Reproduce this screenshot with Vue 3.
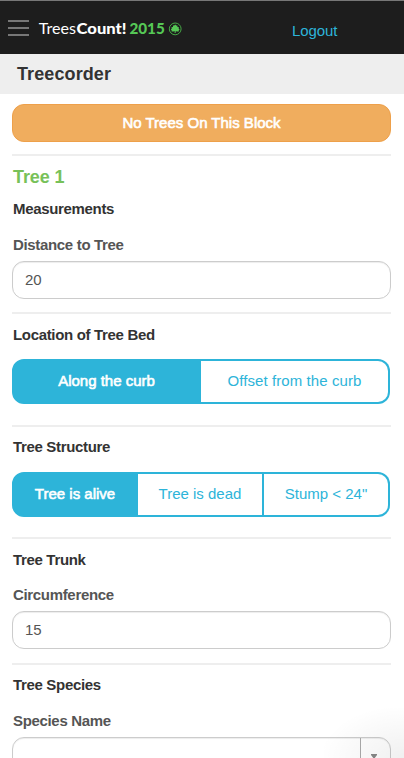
<script setup>
import { ref } from 'vue'

const distance = ref('20')
const circumference = ref('15')
const species = ref('')
const bed = ref(0)
const structure = ref(0)
const beds = ['Along the curb', 'Offset from the curb']
const structures = ['Tree is alive', 'Tree is dead', 'Stump < 24"']
</script>

<template>
  <div class="page">
    <header class="topbar">
      <button class="burger" aria-label="Menu"><i></i><i></i><i></i></button>
      <svg class="logo" width="146" height="20" viewBox="0 0 146 20">
        <text class="light" x="0.8" y="15.3" textLength="37.2" lengthAdjust="spacingAndGlyphs">Trees</text>
        <text class="heavy" x="38.6" y="15.3" textLength="50" lengthAdjust="spacingAndGlyphs">Count!</text>
        <text class="heavy green" x="91.4" y="15.3" textLength="35.4" lengthAdjust="spacingAndGlyphs">2015</text>
        <circle cx="137.2" cy="9.9" r="5.9" fill="none" stroke="#46a846" stroke-width="1" />
        <path fill="#56c856" d="M137.2 5.4l1 1.2 1.2-.1v1.5l1.6.3-.4 1.2 1 1-.9.9.1 1.1-1.9.1-1.2-.5.2 1.7h-1.4l.2-1.7-1.2.5-1.9-.1.1-1.1-.9-.9 1-1-.4-1.2 1.6-.3V6.500l1.2.1z" />
      </svg>
      <a class="logout">Logout</a>
    </header>
    <h1 class="title">Treecorder</h1>

    <main class="content">
      <button class="none">No Trees On This Block</button>

      <section class="first">
        <h2>Tree 1</h2>
        <h3>Measurements</h3>
        <label>Distance to Tree</label>
        <input v-model="distance" class="field" type="text" />
      </section>

      <section class="s-bed">
        <h3>Location of Tree Bed</h3>
        <div class="group two">
          <button v-for="(b, i) in beds" :key="b" :class="{ on: bed === i }" @click="bed = i">{{ b }}</button>
        </div>
      </section>

      <section class="s-structure">
        <h3>Tree Structure</h3>
        <div class="group three">
          <button v-for="(s, i) in structures" :key="s" :class="{ on: structure === i }" @click="structure = i">{{ s }}</button>
        </div>
      </section>

      <section class="s-trunk">
        <h3>Tree Trunk</h3>
        <label>Circumference</label>
        <input v-model="circumference" class="field" type="text" />
      </section>

      <section class="s-species">
        <h3>Tree Species</h3>
        <label>Species Name</label>
        <div class="field combo">
          <input v-model="species" type="text" />
          <span class="toggle"><svg width="6" height="6" viewBox="0 0 6 6"><path d="M0 0h6v1L3 5 0 1z" fill="#888" /></svg></span>
        </div>
      </section>
    </main>
    <div class="shade"></div>
  </div>
</template>

<style>
body { background: #fff; overflow: hidden; }
</style>

<style scoped>
* { box-sizing: border-box; margin: 0; }
.page {
  position: relative;
  height: 758px;
  overflow: hidden;
  background: #fff;
  color: #333;
  font: 15px/20px "Liberation Sans", Arial, sans-serif;
}
button, input { font: inherit; letter-spacing: inherit; padding: 0; border: 0; background: none; color: inherit; outline: 0; }
.topbar {
  display: flex;
  height: 54px;
  padding-left: 8px;
  border-top: 1px solid #777;
  background: #1d1d1d;
}
.burger { display: flex; flex-direction: column; gap: 5px; width: 21px; margin-top: 19px; }
.burger i { width: 21px; height: 2px; background: #777; }
.logo { margin: 18px 0 0 9px; font-family: Lato, sans-serif; font-size: 15.5px; fill: #fff; }
.light { font-weight: 400; }
.heavy { font-weight: 900; }
.green { fill: #56c856; }
.logout { margin: 20px 0 0 108px; color: #2db4d9; letter-spacing: -0.1px; }
.title { height: 40px; padding: 10px 17px; background: #eee; font-size: 18px; line-height: 20px; letter-spacing: 0.1px; }
.content { padding: 10px 13px 0 12px; }
.none {
  display: block;
  width: 100%;
  height: 38px;
  border: 1px solid #eea04a;
  border-radius: 12px;
  background: #f0ad5e;
  color: #fff;
  letter-spacing: 0;
  -webkit-text-stroke: 0.6px #fff;
}
section { border-top: 2px solid #eee; }
h2 { height: 20px; padding-left: 1px; font-size: 18px; line-height: 20px; color: #77c159; letter-spacing: -0.1px; }
h3, label { display: block; height: 20px; padding-left: 1px; font-size: 15px; line-height: 20px; font-weight: bold; letter-spacing: -0.33px; }
label { margin-top: 16px; color: #555; }
.first { margin-top: 12px; padding-top: 11px; }
.first h3 { margin-top: 12px; }
.first label { margin-top: 16px; }
.field {
  display: block;
  width: 100%;
  height: 38px;
  margin-top: 6px;
  padding: 0 12px 2px;
  border: 1px solid #ccc;
  border-radius: 12px;
  background: #fff;
  box-shadow: inset 0 1px 1px rgba(0, 0, 0, .075);
  color: #555;
}
.s-bed { margin-top: 13px; padding-top: 11px; }
.s-structure { margin-top: 21px; padding-top: 10px; }
.s-trunk { margin-top: 20px; padding-top: 11px; }
.s-trunk label { margin-top: 15px; }
.s-species { margin-top: 14px; padding-top: 10px; }
.group { display: grid; width: 378px; height: 45px; margin-top: 14px; }
.s-structure .group { margin-top: 15px; }
.two { grid-template-columns: 189px 1fr; }
.three { grid-template-columns: 126px 126px 1fr; }
.group button { padding-bottom: 1px; border: 2px solid #2db4d9; border-left-width: 0; color: #2db4d9; letter-spacing: 0.08px; }
.three button { letter-spacing: 0; }
.group button:first-child { border-left-width: 2px; border-radius: 12px 0 0 12px; }
.group button:last-child { border-radius: 0 12px 12px 0; }
.group button.on { background: #2db4d9; color: #fff; letter-spacing: 0; -webkit-text-stroke: 0.6px #fff; }
.combo { display: flex; padding: 0; }
.combo input { flex: 1; min-width: 0; padding: 0 12px; }
.toggle { width: 30px; padding: 16px 0 0 10px; border-left: 1px solid #aaa; line-height: 0; }
.shade {
  position: absolute;
  right: 0;
  bottom: 0;
  width: 80px;
  height: 50px;
  background: radial-gradient(ellipse at 100% 100%, rgba(0, 0, 0, .06), transparent 75%);
  pointer-events: none;
}
</style>
